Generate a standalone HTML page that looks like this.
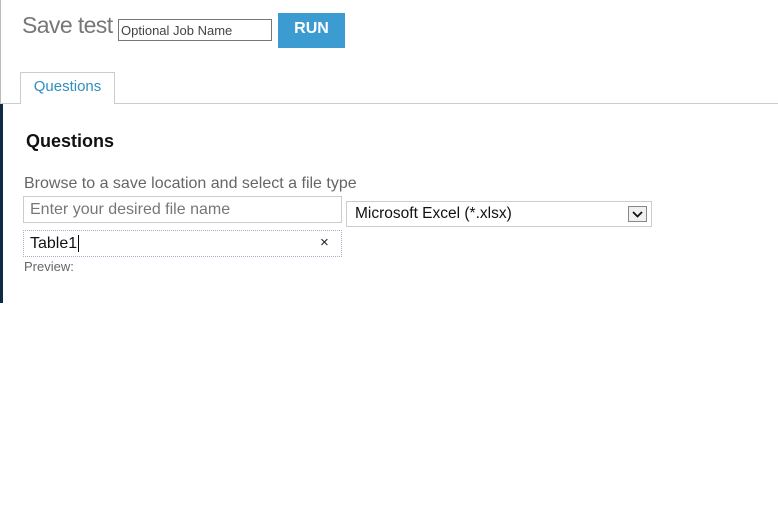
<!DOCTYPE html>
<html><head><style>
body{margin:0;width:778px;height:518px;background:#fff;position:relative;overflow:hidden;font-family:"Liberation Sans",sans-serif}
.a{position:absolute}
</style></head><body>
<div class="a" style="left:0;top:0;width:1px;height:103px;background:#bbb"></div>
<div class="a" style="left:0;top:103px;width:3px;height:200px;background:#0f2a44"></div>
<div class="a" style="left:22px;top:12px;font-size:23px;color:#777;letter-spacing:-0.6px">Save test</div>
<div class="a" style="left:118px;top:19px;height:22px;border:1px solid #777;box-sizing:border-box;width:154px;font-size:13px;color:#444;padding:3px 0 0 2px">Optional Job Name</div>
<div class="a" style="left:278px;top:13px;width:67px;height:35px;background:#3c9bd0;color:#fff;font-weight:bold;font-size:16px;text-align:center;line-height:31px">RUN</div>
<div class="a" style="left:20px;top:72px;width:95px;height:32px;border:1px solid #ccc;border-bottom:none;box-sizing:border-box;background:#fff;color:#2e8fc0;font-size:15px;text-align:center;line-height:27px;z-index:2">Questions</div>
<div class="a" style="left:0;top:103px;width:778px;height:1px;background:#ccc"></div>
<div class="a" style="left:26px;top:131px;font-size:18px;font-weight:bold;color:#111">Questions</div>
<div class="a" style="left:24px;top:175px;font-size:16px;color:#666">Browse to a save location and select a file type</div>
<div class="a" style="left:23px;top:196px;width:319px;height:27px;border:1px solid #ccc;box-sizing:border-box;font-size:16px;color:#777;padding:4px 0 0 6px">Enter your desired file name</div>
<div class="a" style="left:346px;top:201px;width:306px;height:26px;border:1px solid #ccc;box-sizing:border-box;font-size:15.5px;color:#111;padding:3px 0 0 8px">Microsoft Excel (*.xlsx)</div>
<div class="a" style="left:628px;top:206px;width:19px;height:16px;border:1px solid #888;box-sizing:border-box;background:#f0f0f0"><svg width="17" height="14"><path d="M4 5l4.5 4.5L13 5" stroke="#111" stroke-width="1.8" fill="none"/></svg></div>
<div class="a" style="left:23px;top:230px;width:319px;height:27px;border:1px dotted #aac;box-sizing:border-box;font-size:16px;color:#111;padding:4px 0 0 6px">Table1<span style="border-left:1px solid #000;margin-left:1px"></span></div>
<div class="a" style="left:320px;top:234px;font-size:15px;color:#222">×</div>
<div class="a" style="left:24px;top:259px;font-size:13px;color:#666">Preview:</div>
</body></html>
